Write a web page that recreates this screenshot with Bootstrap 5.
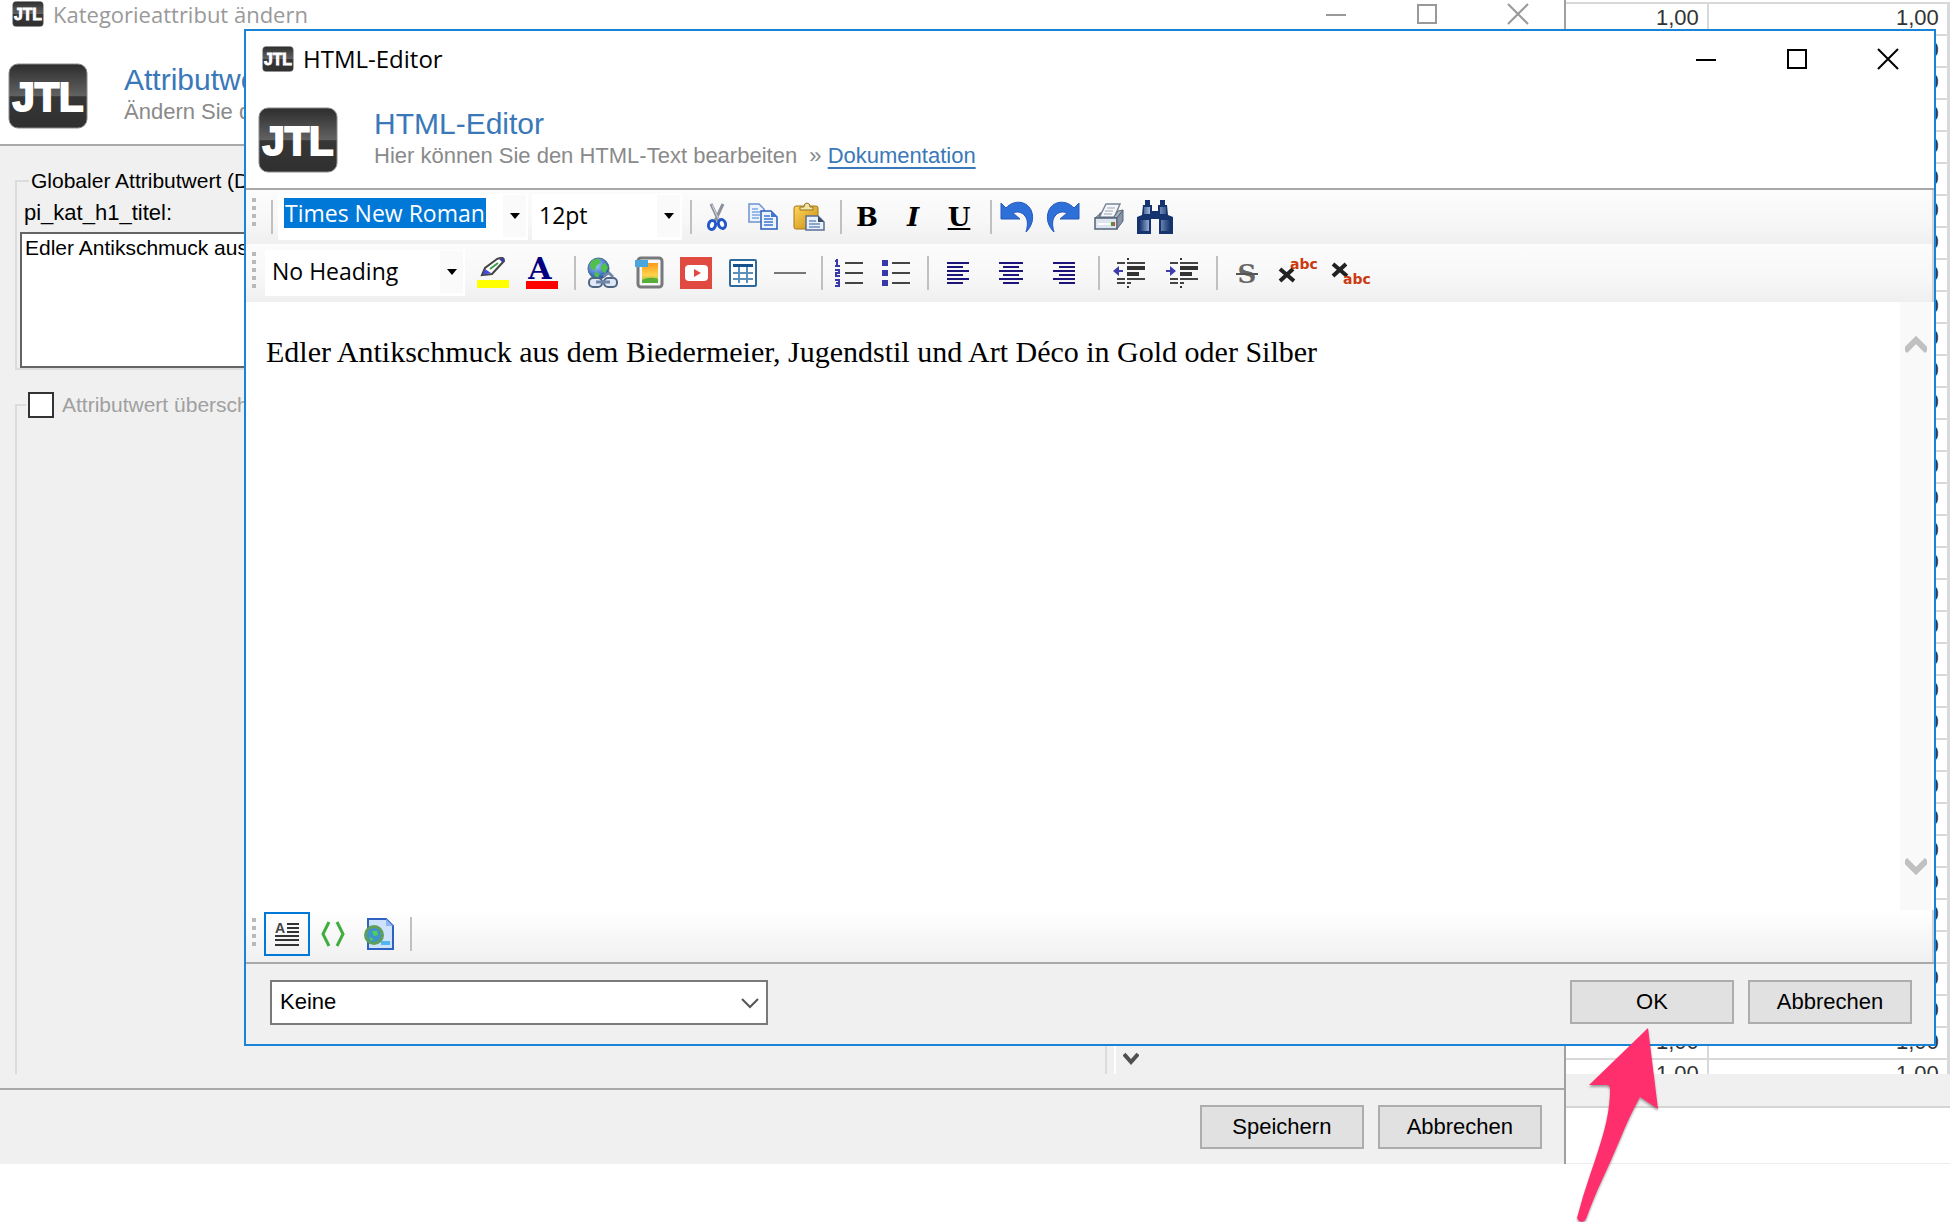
<!DOCTYPE html>
<html lang="de">
<head>
<meta charset="utf-8">
<meta name="viewport" content="width=device-width, initial-scale=1">
<title>HTML-Editor</title>
<link href="https://cdn.jsdelivr.net/npm/bootstrap@5.3.0/dist/css/bootstrap.min.css" rel="stylesheet">
<style>
  body { min-height: 100vh; background: #fff; color: #000; font: 22px/26px "Liberation Sans", Arial, sans-serif; }
  .desk { height: calc(100vh - 58px); }
  .win-back { width: 80.3%; border-right: 2px solid #a0a0a0; }
  .win-dialog { position: absolute; z-index: 2; left: 244px; right: 14px; top: 29px; bottom: 118px; background: #fff; border: 2px solid #1883d7; }
  .titlebar { font: 24px/32px "Open Sans", "Noto Sans", sans-serif; height: 56px; padding-left: 16px; gap: 9px; }
  .win-dialog .titlebar { padding-right: 1px; }
  .win-back .titlebar { font-size: 22px; height: 32px; padding-left: 12px; padding-bottom: 4px; color: #999; }
  .winbtn { width: 91px; height: 32px; padding: 0 0 4px; border: 0; background: none; color: inherit; line-height: 1; }
  .banner { height: 103px; padding: 20px 12px 0; border-bottom: 2px solid #a9a9a9; gap: 36px; background: #fff; }
  .win-back .banner { height: 114px; padding: 31px 8px 0; }
  .banner h1 { font-size: 30px; line-height: 34px; font-weight: 400; color: #3a78b9; margin: 0; }
  .banner p { line-height: 30px; color: #8a8a8a; margin: 0; white-space: pre; }
  .banner a { color: #3a78b9; text-decoration-thickness: 2px; text-underline-offset: 4px; }
  .face { background: #f0f0f0; }
  .stack { padding: 22px 0 14px 15px; }
  .group { border: 2px solid #dcdcdc; padding: 0 3px; margin: 0; }
  .group legend { float: none; width: auto; margin: 0 0 0 9px; padding: 0 2px; font-size: 21px; line-height: 26px; }
  .group .caption { padding-left: 4px; margin: 6px 0; }
  .group textarea { height: 136px; border: 2px solid #646464; padding: 0 3px; font-size: 21px; line-height: 28px; resize: none; background: #fff; }
  .group-open { border-bottom: 0; margin-top: 22px; }
  .group-open legend { margin-left: 6px; }
  .tick { appearance: none; width: 26px; height: 26px; border: 2px solid #333; background: #fff; margin: 0 8px 0 0; }
  .faded { color: #a0a0a0; }
  .strip { width: 457px; padding: 0 0 14px 7px; }
  .strip > div { border-left: 2px solid #fff; padding: 0 0 8px 7px; }
  .cmdbar { padding: 0 22px; gap: 14px; }
  .cmdbar-back { height: 76px; border-top: 2px solid #a9a9a9; }
  .cmdbar-front { height: 82px; border-top: 2px solid #a9a9a9; padding: 0 22px 4px 24px; }
  .push { width: 164px; height: 44px; border: 2px solid #adadad; background: #e1e1e1; border-radius: 0; color: #000; font-size: 22px; line-height: 26px; padding: 0; }
  .tools { background: linear-gradient(#fcfcfc, #f7f7f7 60%, #efefef); padding-left: 6px; border-right: 2px solid #d4d4d4; }
  .tools-a { height: 54px; }
  .tools-b { height: 58px; }
  .tools-c { height: 52px; padding-bottom: 4px; background: linear-gradient(#fff, #f0f0f0); }
  .grip { width: 4px; height: 28px; background: repeating-linear-gradient(#b9b9b9 0 4px, transparent 4px 8px); }
  .grip-long { height: 36px; }
  .bar { width: 2px; height: 34px; margin: 0 2px 0 8px; background: #c0c0c0; }
  .bar-first { margin: 0 5px 0 15px; }
  .tool { height: 44px; padding: 0; border: 0; background: none; color: #000; line-height: 1; width: 46px; display: flex; align-items: center; justify-content: center; }
  .t47 { width: 47px; } .t49 { width: 49px; } .t53 { width: 53px; }
  .tool-on { border: 2px solid #0078d7; }
  .combo { position: relative; height: 46px; background: #fff; font: 23px/30px "Open Sans", "Noto Sans", sans-serif; }
  .combo select { appearance: none; border: 0; background: none; width: 100%; height: 100%; padding: 0 30px 4px 7px; color: #000; }
  .combo .arrow { position: absolute; right: 2px; top: 1px; width: 23px; height: 42px; background: #fafafa; border: 0; padding: 0; pointer-events: none; display: flex; align-items: center; justify-content: center; }
  .combo-font { width: 250px; padding: 4px 6px; }
  .combo-font input { width: 202px; height: 30px; border: 0; padding: 0 1px; background: #0078d7; color: #fff; }
  .combo-size { width: 150px; margin-left: 4px; }
  .combo-head { width: 200px; margin: 0 3px 0 9px; }
  .page-text { font: 30px/38px "Liberation Serif", "Times New Roman", serif; padding: 31px 20px; outline: 0; }
  .page-text p { margin: 0; }
  .scroller { width: 31px; background: #f9f9f9; margin-right: 3px; padding: 34px 0 35px; }
  .pick { position: relative; width: 498px; height: 45px; }
  .pick select { appearance: none; width: 100%; height: 100%; border: 2px solid #7a7a7a; background: #fff; padding: 0 8px; color: #000; }
  .pick svg { position: absolute; right: 9px; top: 17px; pointer-events: none; }
  .price-list { min-height: 0; padding-top: 2px; }
  .prices { table-layout: fixed; width: 384px; margin: 0; border-collapse: collapse; color: #333; }
  .prices td { height: 32px; padding: 1px 8px 0 0; line-height: 26px; text-align: right; border: 0 solid #d9d9d9; border-width: 2px 2px 0 0; vertical-align: top; }
  .status { height: 34px; border-bottom: 2px solid #d5d5d5; }
  .blank { height: 56px; border-bottom: 1px solid #ececec; }
  .pointer { position: absolute; z-index: 3; right: 285px; bottom: -58px; filter: drop-shadow(0 2px 1px rgba(0,0,0,.35)); }
  .bold-serif { font: 700 26px/26px "DejaVu Serif", "Liberation Serif", serif; }
</style>
<script src="https://cdn.jsdelivr.net/npm/bootstrap@5.3.0/dist/js/bootstrap.bundle.min.js" defer></script>
</head>
<body>
<svg width="0" height="0" class="position-absolute" aria-hidden="true">
  <defs>
    <linearGradient id="lg" x1="0" y1="0" x2="0" y2="1"><stop offset="0" stop-color="#2d2d2d"/><stop offset=".5" stop-color="#626262"/><stop offset=".51" stop-color="#363636"/><stop offset="1" stop-color="#303030"/></linearGradient>
    <linearGradient id="gold" x1="0" y1="0" x2="1" y2="1"><stop offset="0" stop-color="#ffd75a"/><stop offset="1" stop-color="#c98a10"/></linearGradient>
    <linearGradient id="blu" x1="0" y1="0" x2="1" y2="0"><stop offset="0" stop-color="#0e2d66"/><stop offset=".4" stop-color="#b9cdf0"/><stop offset="1" stop-color="#0e2d66"/></linearGradient>
    <linearGradient id="sun" x1="0" y1="0" x2="0" y2="1"><stop offset="0" stop-color="#ff9a1a"/><stop offset=".6" stop-color="#ffd24a"/><stop offset="1" stop-color="#7cc040"/></linearGradient>
    <radialGradient id="sea" cx=".4" cy=".35" r=".7"><stop offset="0" stop-color="#9cc8ff"/><stop offset="1" stop-color="#1b4fa8"/></radialGradient>
    <symbol id="jtl" viewBox="0 0 80 66"><rect x="1" y="1" width="78" height="64" rx="9" fill="url(#lg)" stroke="#8a8a8a" stroke-width="1"/><text x="40" y="48" text-anchor="middle" font-family="Liberation Sans, Arial, sans-serif" font-weight="700" font-size="40" fill="#fff" stroke="#fff" stroke-width="2">JTL</text></symbol>
    <symbol id="globe" viewBox="0 0 24 24"><circle cx="12" cy="12" r="11" fill="url(#sea)" stroke="#4a6a8a"/><path d="M3 7Q7 1 13 2l1 4-4 3-2 5-4-2zM14 10l5-4 3 5-3 6-3-2zM8 16l5 1-1 5-4-2z" fill="#4fc04a"/></symbol>
  </defs>
</svg>

<main class="desk position-relative d-flex">
  <section class="win-back d-flex flex-column flex-shrink-0 face" aria-label="Kategorieattribut ändern">
    <header class="titlebar d-flex align-items-center bg-white">
      <svg width="32" height="26"><use href="#jtl"/></svg><span class="flex-grow-1">Kategorieattribut ändern</span>
      <div class="d-flex">
      <button class="winbtn" aria-label="Minimieren"><svg width="22" height="22" stroke="currentColor" stroke-width="2"><path d="M1 12h20"/></svg></button>
      <button class="winbtn" aria-label="Maximieren"><svg width="22" height="22" fill="none" stroke="currentColor" stroke-width="2"><path d="M2 2h18v18H2z"/></svg></button>
      <button class="winbtn" aria-label="Schließen"><svg width="22" height="22" stroke="currentColor" stroke-width="2"><path d="M1 1l20 20M21 1L1 21"/></svg></button>
      </div>
    </header>
    <div class="banner d-flex">
      <svg width="80" height="66" class="flex-shrink-0"><use href="#jtl"/></svg>
      <div><h1>Attributwert</h1><p>Ändern Sie den Attributwert</p></div>
    </div>
    <div class="d-flex flex-grow-1" style="min-height:0">
      <div class="stack d-flex flex-column flex-grow-1">
        <fieldset class="group">
          <legend>Globaler Attributwert (Deutsch)</legend>
          <label for="h1titel" class="caption d-block">pi_kat_h1_titel:</label>
          <textarea id="h1titel" class="d-block w-100 overflow-hidden">Edler Antikschmuck aus dem Biedermeier, Jugendstil und Art Déco in Gold oder Silber</textarea>
        </fieldset>
        <fieldset class="group group-open flex-grow-1">
          <legend class="d-flex align-items-center faded"><input type="checkbox" class="tick" id="ueber"><label for="ueber">Attributwert überschreiben</label></legend>
        </fieldset>
      </div>
      <div class="strip d-flex"><div class="d-flex align-items-end">
        <svg width="16" height="14" fill="none" stroke="#505050" stroke-width="4"><path d="M1 2l7 8 7-8"/></svg>
      </div></div>
    </div>
    <footer class="cmdbar cmdbar-back d-flex align-items-center justify-content-end">
      <button class="push">Speichern</button><button class="push">Abbrechen</button>
    </footer>
  </section>

  <section class="d-flex flex-column flex-grow-1 overflow-hidden" aria-label="Preise">
    <div class="price-list flex-grow-1 overflow-hidden">
      <table class="prices"><colgroup><col style="width:142px"><col style="width:240px"><col></colgroup><tbody id="rows"></tbody></table>
    </div>
    <div class="status face flex-shrink-0"></div>
    <div class="blank flex-shrink-0"></div>
  </section>

  <section class="win-dialog d-flex flex-column" role="dialog" aria-label="HTML-Editor">
    <header class="titlebar d-flex align-items-center flex-shrink-0">
      <svg width="32" height="26"><use href="#jtl"/></svg><span class="flex-grow-1">HTML-Editor</span>
      <div class="d-flex">
      <button class="winbtn" aria-label="Minimieren"><svg width="22" height="22" stroke="currentColor" stroke-width="2"><path d="M1 12h20"/></svg></button>
      <button class="winbtn" aria-label="Maximieren"><svg width="22" height="22" fill="none" stroke="currentColor" stroke-width="2"><path d="M2 2h18v18H2z"/></svg></button>
      <button class="winbtn" aria-label="Schließen"><svg width="22" height="22" stroke="currentColor" stroke-width="2"><path d="M1 1l20 20M21 1L1 21"/></svg></button>
      </div>
    </header>
    <div class="banner d-flex flex-shrink-0">
      <svg width="80" height="66"><use href="#jtl"/></svg>
      <div><h1>HTML-Editor</h1><p>Hier können Sie den HTML-Text bearbeiten  » <a href="#">Dokumentation</a></p></div>
    </div>

    <div class="tools tools-a d-flex align-items-center flex-shrink-0">
      <span class="grip align-self-start mt-2"></span>
      <span class="bar bar-first"></span>
      <div class="combo combo-font"><input type="text" class="d-block" value="Times New Roman" aria-label="Schriftart"><button class="arrow" aria-label="Schriftarten"><svg width="12" height="6"><path d="M1 0h10L6 6z"/></svg></button></div>
      <div class="combo combo-size"><select aria-label="Schriftgröße"><option>12pt</option></select><span class="arrow"><svg width="12" height="6"><path d="M1 0h10L6 6z"/></svg></span></div>
      <span class="bar"></span>
      <button class="tool" aria-label="Ausschneiden"><svg width="26" height="30" viewBox="0 0 26 30"><path d="M7 2l8 17M19 2l-8 17" stroke="#8b929c" stroke-width="3" fill="none"/><path d="M8 3l7 15" stroke="#d5d9df"/><ellipse cx="8" cy="23" rx="3.500" ry="4.500" fill="#fff" stroke="#2458c8" stroke-width="3" transform="rotate(15 8 23)"/><ellipse cx="18" cy="22" rx="3.500" ry="4.500" fill="#fff" stroke="#2458c8" stroke-width="3" transform="rotate(-20 18 22)"/></svg></button>
      <button class="tool" aria-label="Kopieren"><svg width="32" height="30" viewBox="0 0 32 30"><g fill="#eef4ff" stroke="#6d94cf" stroke-width="1.500"><path d="M2 2h10l5 5v13H2z"/><path d="M14 9h10l6 6v12H14z" stroke="#2a5cb8"/></g><path d="M5 7h6M5 10h8M5 13h8M5 16h7" stroke="#7ea6de" stroke-width="1.500"/><path d="M17 14h6M17 17h9M17 20h9M17 23h9" stroke="#3f74cc" stroke-width="1.500"/><path d="M24 9v6h6z" fill="#3e78d4"/></svg></button>
      <button class="tool" aria-label="Einfügen"><svg width="34" height="30" viewBox="0 0 34 30"><rect x="2" y="4" width="24" height="23" rx="2" fill="url(#gold)" stroke="#a87718"/><path d="M8 8V5h4q0-4 3-4t3 4h3v3z" fill="#f7e3a0" stroke="#8f7430"/><path d="M14 14h12l6 6v8H14z" fill="#eaf0fa" stroke="#586f95" stroke-width="1.500"/><path d="M17 19h7M17 22h11M17 25h11" stroke="#6d8cc0" stroke-width="1.500"/><path d="M26 14v6h6z" fill="#3c4d66"/></svg></button>
      <span class="bar"></span>
      <button class="tool bold-serif" aria-label="Fett">B</button>
      <button class="tool bold-serif fst-italic" aria-label="Kursiv">I</button>
      <button class="tool bold-serif" aria-label="Unterstrichen"><u>U</u></button>
      <span class="bar"></span>
      <button class="tool" aria-label="Rückgängig"><svg width="34" height="32" viewBox="0 0 34 32"><path d="M1 2l5 5C13-1 26-1 31 9c4 9 0 17-5 22 2-7 2-12-1-16-3-4-8-5-12-3l7 6H1z" fill="#2f6fd8" stroke="#2258bd"/></svg></button>
      <button class="tool" aria-label="Wiederholen"><svg width="34" height="32" viewBox="0 0 34 32"><path d="M33 2l-5 5C21-1 8-1 3 9c-4 9 0 17 5 22-2-7-2-12 1-16 3-4 8-5 12-3l-7 6h19z" fill="#2f6fd8" stroke="#2258bd"/></svg></button>
      <button class="tool" aria-label="Drucken"><svg width="32" height="30" viewBox="0 0 32 30"><path d="M13 2h14l-6 14H6z" fill="#f6f8fb" stroke="#7b8794" stroke-width="1.500"/><path d="M14 6h8M12 9h8M11 12h8" stroke="#9aa5b2"/><path d="M2 16l6-5h-1l-1 4h15l4-6 5-1-6 8z" fill="#a8b3c0" stroke="#5d6b7c"/><path d="M2 16h22v11H2z" fill="#dfe5ec" stroke="#52647a" stroke-width="1.500"/><path d="M24 16l6-8v11l-6 8z" fill="#8795a5" stroke="#52647a"/><path d="M5 22h12" stroke="#fff" stroke-width="2"/><path d="M18 20h2v4h-2z" fill="#1fae3a"/><path d="M20 20h2v4h-2z" fill="#d44"/></svg></button>
      <button class="tool" aria-label="Suchen"><svg width="38" height="34" viewBox="0 0 38 34"><path d="M9 0h5v5h2v6h6V5h2V0h5v5h2l1 10 5 2v17H23V19h-8v15H1V17l5-2 1-10h2z" fill="#14336f"/><path d="M3 20h10v11H3zM25 20h10v11H25zM8 7h6v7H8zM24 7h6v7h-6z" fill="url(#blu)"/></svg></button>
    </div>

    <div class="tools tools-b d-flex align-items-center flex-shrink-0">
      <span class="grip grip-long align-self-start mt-2"></span>
      <div class="combo combo-head"><select aria-label="Absatzformat"><option>No Heading</option></select><span class="arrow"><svg width="12" height="6"><path d="M1 0h10L6 6z"/></svg></span></div>
      <button class="tool t49" aria-label="Hervorheben"><svg width="32" height="32" viewBox="0 0 32 32"><path d="M5 18l3-7L20 2q7-3 7 2L15 17z" fill="#fff" stroke="#444" stroke-width="2"/><path d="M8 12l6 4-8 2z" fill="#4a4ae0"/><path d="M13 12l8-6" stroke="#3aa04a" stroke-width="2"/><path d="M22 2l5-1-1 5z" fill="#3a3ab0"/><path d="M0 23h32v8H0z" fill="#ff0"/></svg></button>
      <button class="tool t49" aria-label="Textfarbe"><svg width="32" height="34" viewBox="0 0 32 34"><text x="14" y="23" text-anchor="middle" font-family="DejaVu Serif" font-weight="700" font-size="30" fill="#000080">A</text><path d="M0 25h32v8H0z" fill="red"/></svg></button>
      <span class="bar"></span>
      <button class="tool t47" aria-label="Link"><svg width="32" height="34" viewBox="0 0 32 34"><use href="#globe" x="1" y="1" width="23" height="23"/><g fill="#dfe8f4" stroke="#4e6583" stroke-width="2"><rect x="3" y="22" width="13" height="9" rx="4"/><rect x="18" y="22" width="13" height="9" rx="4"/><path d="M10 26h14M17 20l6-3 4 4" fill="none" stroke="#6f88a8" stroke-width="3"/></g></svg></button>
      <button class="tool t47" aria-label="Bild"><svg width="30" height="34" viewBox="0 0 30 34"><rect x="4" y="2" width="24" height="29" rx="3" fill="#f6f6f6" stroke="#77797c" stroke-width="3"/><path d="M8 7h16v20H8z" fill="url(#sun)"/><path d="M1 4h13v7H1z" fill="#4aa6dc"/><path d="M8 24q8-4 16-1v4H8z" fill="#57ad35"/></svg></button>
      <button class="tool t47" aria-label="Video"><svg width="32" height="32" viewBox="0 0 32 32"><path d="M0 0h32v32H0z" fill="#e04a40"/><rect x="5" y="8" width="23" height="16" rx="4" fill="#fff"/><path d="M14 12l7 4-7 4z" fill="#e04a40"/></svg></button>
      <button class="tool t47" aria-label="Tabelle"><svg width="28" height="28" viewBox="0 0 28 28"><rect x="1" y="1" width="26" height="26" rx="1" fill="#fff" stroke="#2f6a9e" stroke-width="2"/><path d="M4 5h20v3H4z" fill="#17508a"/><path d="M4 14h20M4 20h20M10 8v16M18 8v16" stroke="#5b90bb" stroke-width="2"/></svg></button>
      <button class="tool t47" aria-label="Linie"><svg width="32" height="4"><path d="M0 2h32" stroke="#777" stroke-width="2"/></svg></button>
      <span class="bar"></span>
      <button class="tool t47" aria-label="Nummerierte Liste"><svg width="30" height="30" viewBox="0 0 30 30"><path d="M3 1v6M1 3h2M1 8h5M1 12h4v3H2v3h4M1 22h4v6H1M2 25h3" fill="none" stroke="#3838a8" stroke-width="2"/><path d="M11 5h18M11 15h18M11 25h18" stroke="#444" stroke-width="2"/></svg></button>
      <button class="tool t47" aria-label="Aufzählung"><svg width="30" height="30" viewBox="0 0 30 30"><path d="M1 2h6v6H1zM1 12h6v6H1zM1 22h6v6H1z" fill="#3838a8"/><path d="M11 5h18M11 15h18M11 25h18" stroke="#444" stroke-width="2"/></svg></button>
      <span class="bar"></span>
      <button class="tool t53" aria-label="Linksbündig"><svg width="24" height="26" stroke="#1c1478" stroke-width="2"><path d="M1 3h22M1 7h16M1 11h22M1 15h16M1 19h22M1 23h16"/></svg></button>
      <button class="tool t53" aria-label="Zentriert"><svg width="24" height="26" stroke="#1c1478" stroke-width="2"><path d="M0 3h24M4 7h16M0 11h24M4 15h16M0 19h24M4 23h16"/></svg></button>
      <button class="tool t53" aria-label="Rechtsbündig"><svg width="24" height="26" stroke="#1c1478" stroke-width="2"><path d="M1 3h22M7 7h16M1 11h22M7 15h16M1 19h22M7 23h16"/></svg></button>
      <span class="bar"></span>
      <button class="tool t53" aria-label="Einzug verkleinern"><svg width="34" height="32" viewBox="0 0 34 32"><path d="M5 6h8M15 6h18M5 22h8M15 22h18M5 26h8M15 26h4" stroke="#444" stroke-width="2"/><path d="M15 9h18v4H15zM15 15h12v4H15zM15 1h2v2h-2zM15 29h2v2h-2z" fill="#333"/><path d="M1 14l6-5v4h4v2H7v4z" fill="#3d3db0"/></svg></button>
      <button class="tool t53" aria-label="Einzug vergrößern"><svg width="34" height="32" viewBox="0 0 34 32"><path d="M5 6h8M15 6h18M5 22h8M15 22h18M5 26h8M15 26h4" stroke="#444" stroke-width="2"/><path d="M15 9h18v4H15zM15 15h12v4H15zM15 1h2v2h-2zM15 29h2v2h-2z" fill="#333"/><path d="M11 14L5 9v4H1v2h4v4z" fill="#3d3db0"/></svg></button>
      <span class="bar"></span>
      <button class="tool t53" aria-label="Durchgestrichen"><svg width="24" height="28" viewBox="0 0 24 28"><text x="12" y="24" text-anchor="middle" font-family="DejaVu Serif" font-weight="700" font-size="26" fill="#666">S</text><path d="M1 15h22" stroke="#555" stroke-width="2"/></svg></button>
      <button class="tool t53" aria-label="Hochgestellt"><svg width="44" height="34" viewBox="0 0 44 34"><path d="M2 13l14 12M15 13L2 25" stroke="#222" stroke-width="4"/><text x="12" y="13" font-family="DejaVu Sans" font-weight="700" font-size="14" fill="#cc3a10">abc</text></svg></button>
      <button class="tool t53" aria-label="Tiefgestellt"><svg width="44" height="34" viewBox="0 0 44 34"><path d="M2 8l14 12M15 8L2 20" stroke="#222" stroke-width="4"/><text x="12" y="28" font-family="DejaVu Sans" font-weight="700" font-size="14" fill="#cc3a10">abc</text></svg></button>
    </div>

    <div class="d-flex flex-grow-1 overflow-hidden">
      <div class="page-text flex-grow-1" contenteditable="true" role="textbox" aria-label="Text"><p>Edler Antikschmuck aus dem Biedermeier, Jugendstil und Art Déco in Gold oder Silber</p></div>
      <div class="scroller d-flex flex-column justify-content-between align-items-center">
        <svg width="22" height="18" fill="none" stroke="#c0c0c0" stroke-width="6"><path d="M0 15L11 4l11 11"/></svg>
        <svg width="22" height="18" fill="none" stroke="#c0c0c0" stroke-width="6"><path d="M0 3l11 11L22 3"/></svg>
      </div>
    </div>

    <div class="tools tools-c d-flex align-items-center flex-shrink-0">
      <span class="grip align-self-start mt-2 me-2"></span>
      <button class="tool tool-on" aria-label="Entwurf"><svg width="24" height="24" viewBox="0 0 24 24"><text x="0" y="11" font-family="Liberation Sans" font-weight="700" font-size="14" fill="#444">A</text><path d="M12 2h12M12 6h12M12 10h12M0 14h24M0 18h24M0 23h24" stroke="#333" stroke-width="2"/></svg></button>
      <button class="tool" aria-label="Quelltext"><svg width="24" height="26" fill="none" stroke="#3fae3f" stroke-width="3"><path d="M8 1L2 13l6 12M16 1l6 12-6 12"/></svg></button>
      <button class="tool" aria-label="Vorschau"><svg width="32" height="34" viewBox="0 0 32 34"><path d="M5 2h18l7 7v23H5z" fill="#cfe2fb" stroke="#2f62c0" stroke-width="2"/><path d="M23 2v7h7z" fill="#8fb8ee"/><path d="M18 24h9v4h-9z" fill="#53b4f4"/><circle cx="11" cy="18" r="10" fill="#5f9f5a"/><circle cx="11" cy="18" r="7" fill="#3f93c8"/><path d="M9 14l5 0 1 4-4 1zM6 20l5 2-3 2z" fill="#4ed05a"/></svg></button>
      <span class="bar"></span>
    </div>
    <footer class="cmdbar cmdbar-front face d-flex align-items-center flex-shrink-0">
      <div class="pick me-auto"><select aria-label="Vorlage"><option>Keine</option></select><svg width="18" height="12" fill="none" stroke="#555" stroke-width="2"><path d="M1 2l8 8 8-8"/></svg></div>
      <button class="push">OK</button><button class="push">Abbrechen</button>
    </footer>
  </section>

  <svg class="pointer" width="90" height="197" viewBox="0 0 90 197" aria-hidden="true"><path d="M73 3L14 60h17c5 0 4 4 4 10Q34 88 29 106T15 150Q8 170 2 193q2 4 5 4 3-1 4-3Q19 172 27 155T46 112Q55 90 65 72L83 84z" fill="#ff2f6d"/></svg>
</main>
<script>
  document.getElementById('rows').innerHTML = '<tr><td>1,00</td><td>1,00</td><td></td></tr>'.repeat(34);
</script>
</body>
</html>
